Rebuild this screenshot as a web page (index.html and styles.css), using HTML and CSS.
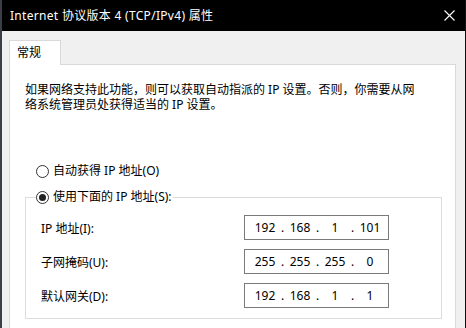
FILE: index.html
```html
<!DOCTYPE html>
<html lang="zh-CN">
<head>
<meta charset="utf-8">
<title>Internet 协议版本 4 (TCP/IPv4) 属性</title>
<link rel="stylesheet" href="styles.css">
</head>
<body>
<div class="window">
  <div class="titlebar">
    <span class="title">Internet 协议版本 4 (TCP/IPv4) 属性</span>
    <svg class="close" width="11" height="11" viewBox="0 0 11 11"><path d="M0.5 0.5 L10.5 10.5 M10.5 0.5 L0.5 10.5" stroke="#fff" stroke-width="1.1" fill="none"/></svg>
  </div>
  <div class="content">
    <div class="tabs"><div class="tab">常规</div></div>
    <div class="panel">
      <p class="desc"><span class="line">如果网络支持此功能，则可以获取自动指派的 IP 设置。否则，你需要从网</span><span class="line">络系统管理员处获得适当的 IP 设置。</span></p>
      <label class="radio-row auto">
        <span class="radio"></span>
        <span>自动获得 IP 地址(O)</span>
      </label>
      <fieldset class="group">
        <legend class="radio-row">
          <span class="radio checked"></span>
          <span>使用下面的 IP 地址(S):</span>
        </legend>
        <div class="rows">
          <div class="row">
            <span class="label">IP 地址(I):</span>
            <div class="ipbox"><span class="f">192</span><span class="d">.</span><span class="f">168</span><span class="d">.</span><span class="f">1</span><span class="d">.</span><span class="f">101</span></div>
          </div>
          <div class="row">
            <span class="label">子网掩码(U):</span>
            <div class="ipbox"><span class="f">255</span><span class="d">.</span><span class="f">255</span><span class="d">.</span><span class="f">255</span><span class="d">.</span><span class="f">0</span></div>
          </div>
          <div class="row">
            <span class="label">默认网关(D):</span>
            <div class="ipbox"><span class="f">192</span><span class="d">.</span><span class="f">168</span><span class="d">.</span><span class="f">1</span><span class="d">.</span><span class="f">1</span></div>
          </div>
        </div>
      </fieldset>
    </div>
  </div>
</div>
</body>
</html>
```
FILE: styles.css
```css
* { box-sizing: border-box; }
html, body {
  margin: 0;
  padding: 0;
  width: 466px;
  height: 328px;
  overflow: hidden;
  background: #f0f0f0;
  font-family: "Noto Sans", "Noto Sans CJK SC", sans-serif;
  font-size: 12px;
  color: #000;
}
.window {
  height: 328px;
  border-left: 2px solid #3a3f4a;
  border-right: 1px solid #111;
  background: #f0f0f0;
  overflow: hidden;
}
.titlebar {
  height: 31px;
  background: #000;
  color: #fff;
  display: flex;
  align-items: center;
  justify-content: space-between;
  padding: 0 10px 0 8px;
}
.title {
  font-size: 12px;
  line-height: 16px;
  letter-spacing: 0.3px;
  white-space: nowrap;
}
.close { display: block; }
.content {
  padding: 9px 9px 0 7px;
}
.tabs { display: flex; }
.tab {
  width: 52px;
  height: 25px;
  margin-bottom: -1px;
  position: relative;
  z-index: 1;
  background: #fff;
  border: 1px solid #d9d9d9;
  border-bottom: none;
  padding-left: 7px;
  line-height: 23px;
}
.panel {
  background: #fff;
  border: 1px solid #d9d9d9;
  height: 300px;
  padding: 17px 0 0 15px;
}
.desc {
  margin: 0;
  display: flex;
  flex-direction: column;
  white-space: nowrap;
}
.desc .line {
  display: block;
  height: 15px;
  line-height: 15px;
}
.radio-row {
  display: flex;
  align-items: center;
  gap: 4px;
  height: 16px;
  line-height: 16px;
  white-space: nowrap;
}
.auto {
  margin: 51px 0 0 11px;
}
.radio {
  width: 13px;
  height: 13px;
  border: 1px solid #333;
  border-radius: 50%;
  background: #fff;
  display: flex;
  align-items: center;
  justify-content: center;
  flex: none;
}
.radio.checked::after {
  content: "";
  width: 7px;
  height: 7px;
  border-radius: 50%;
  background: #222;
}
.group {
  margin: 10px 0 0 0;
  width: 417px;
  border: 1px solid #dcdcdc;
  padding: 10px 0 10px 15px;
  min-width: 0;
}
.group legend {
  margin-left: -5px;
  padding: 0 1px 0 0;
  background: #fff;
}
.rows {
  display: flex;
  flex-direction: column;
  gap: 9px;
}
.row {
  display: flex;
  align-items: center;
  height: 25px;
}
.label {
  width: 203px;
  white-space: nowrap;
}
.ipbox {
  width: 145px;
  height: 25px;
  border: 1px solid #7a7a7a;
  display: flex;
  align-items: center;
  padding-left: 6px;
}
.ipbox .f {
  width: 28px;
  text-align: center;
}
.ipbox .d {
  width: 7px;
  text-align: center;
}
```
